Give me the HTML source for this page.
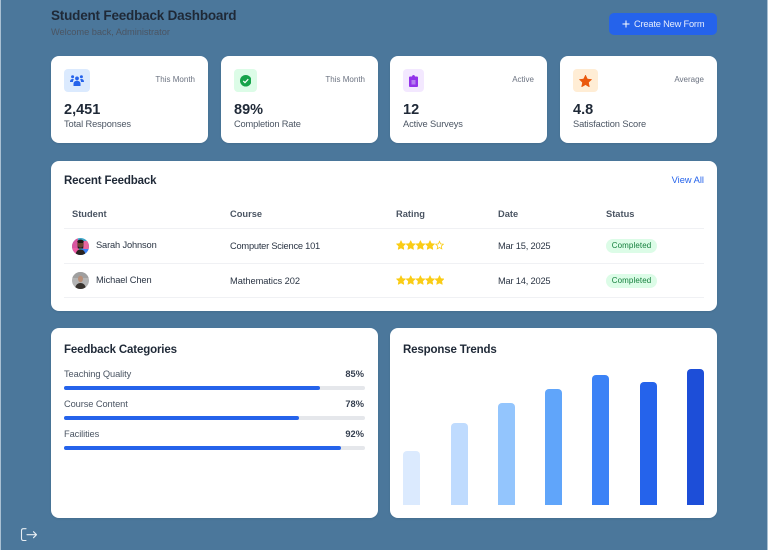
<!DOCTYPE html>
<html lang="en"><head><meta charset="utf-8"><title>Student Feedback Dashboard</title>
<style>
*{box-sizing:border-box}
html,body{margin:0;padding:0}
body{width:768px;height:550px;overflow:hidden;position:relative;background:#4b779b;font-family:"Liberation Sans",sans-serif}
.edge{position:absolute;top:0;bottom:0;width:1px;background:#a9c0d3}
.card{position:absolute;background:#fff;border-radius:8px;box-shadow:0 1px 2px rgba(0,0,0,.08)}
.t{position:absolute;white-space:nowrap;line-height:14px;height:14px}
.ib{position:absolute;top:13px;height:23px;border-radius:4px}
.ib svg{position:absolute}
.tag{top:17px;font-size:8px;color:#6b7280}
.num{top:46.500px;font-size:14.500px;font-weight:700;color:#1f2937}
.lab{top:61px;font-size:9.300px;color:#4b5563;letter-spacing:-.12px}
.h{font-size:11.500px;font-weight:700;color:#1f2937;letter-spacing:-.15px}
.th{top:207px;font-size:9.300px;font-weight:700;color:#4b5563}
.td{font-size:9.300px;color:#2b3544;letter-spacing:-.15px}
.badge{position:absolute;left:606px;width:51px;height:14px;border-radius:7px;background:#dcfce7;color:#15803d;font-size:8px;line-height:14px;text-align:center;letter-spacing:.1px}
.line{position:absolute;left:64px;width:640px;height:1px;background:#f0f1f4}
.stars{position:absolute;left:396px}
.pl{left:13px;font-size:9.300px;color:#4b5563;letter-spacing:-.1px}
.pv{right:14px;font-size:9.300px;font-weight:700;color:#374151}
.track{position:absolute;left:13px;width:301px;height:4px;border-radius:2px;background:#e5e7eb}
.fill{height:4px;border-radius:2px;background:#2563eb}
.bar{position:absolute;width:17px;bottom:13px;border-radius:4px 4px 0 0}
</style></head><body>
<div class="edge" style="left:0"></div><div class="edge" style="left:767px"></div>

<div class="t" style="left:51px;top:9px;font-size:13.500px;font-weight:700;color:#1f2937;letter-spacing:-.2px">Student Feedback Dashboard</div>
<div class="t" style="left:51px;top:25px;font-size:9.300px;color:#4b5563;letter-spacing:-.05px">Welcome back, Administrator</div>

<div style="position:absolute;left:609px;top:13px;width:108px;height:22px;border-radius:5px;background:#2563eb">
<svg style="position:absolute;left:13px;top:7px" width="8" height="8" viewBox="0 0 8 8"><path d="M4 .5v7M.5 4h7" stroke="#fff" stroke-width="1" fill="none"/></svg>
<div class="t" style="left:25px;top:4px;font-size:9.300px;color:#e6edfd;letter-spacing:-.2px">Create New Form</div>
</div>

<div class="card" style="left:51px;top:56px;width:157px;height:87px">
<div class="ib" style="left:13px;width:26px;background:#dbeafe">
<svg style="left:6px;top:6px" width="14" height="11" viewBox="0 0 14 11" fill="#2563eb"><circle cx="2.600" cy="1.800" r="1.500"/><circle cx="11.400" cy="1.800" r="1.500"/><circle cx="7" cy="3.400" r="1.900"/><path d="M0 7c0-2 1-3 2.600-3 .6 0 1 .1 1.400.4C3.300 5 3 5.900 3 7H0zM14 7c0-2-1-3-2.600-3-.6 0-1 .1-1.400.4.700.6 1 1.500 1 2.600h3zM3.500 11V8.800c0-1.800 1.400-3 3.500-3s3.500 1.200 3.500 3V11z"/></svg></div>
<div class="t tag" style="right:13px">This Month</div>
<div class="t num" style="left:13px">2,451</div>
<div class="t lab" style="left:13px">Total Responses</div>
</div>

<div class="card" style="left:221px;top:56px;width:157px;height:87px">
<div class="ib" style="left:12.700px;width:23.300px;background:#dcfce7">
<svg style="left:6px;top:6px" width="11.500" height="11.500" viewBox="0 0 12 12"><circle cx="6" cy="6" r="6" fill="#16a34a"/><path d="M3.400 6.200l1.800 1.800 3.400-3.600" stroke="#fff" stroke-width="1.300" fill="none"/></svg></div>
<div class="t tag" style="right:13px">This Month</div>
<div class="t num" style="left:13px">89%</div>
<div class="t lab" style="left:13px;letter-spacing:-.17px">Completion Rate</div>
</div>

<div class="card" style="left:390px;top:56px;width:157px;height:87px">
<div class="ib" style="left:13px;width:21px;background:#f3e8ff">
<svg style="left:6px;top:5.500px" width="9" height="12" viewBox="0 0 9 12"><path d="M1 1.500h2C3.200.5 3.700 0 4.500 0S5.800.5 6 1.500h2c.6 0 1 .4 1 1V11c0 .6-.4 1-1 1H1c-.6 0-1-.4-1-1V2.500c0-.6.4-1 1-1z" fill="#9333ea"/><rect x="2.500" y="5" width="4" height="4.500" fill="#b57fef"/></svg></div>
<div class="t tag" style="right:13px">Active</div>
<div class="t num" style="left:13px">12</div>
<div class="t lab" style="left:13px">Active Surveys</div>
</div>

<div class="card" style="left:560px;top:56px;width:157px;height:87px">
<div class="ib" style="left:13px;width:24.700px;background:#ffedd5">
<svg style="left:6px;top:5.500px" width="13" height="12" viewBox="0 0 13 12"><path d="M6.500 0l1.900 4 4.300.5-3.200 3 .9 4.500-3.900-2.300L2.600 12l.9-4.500L.3 4.500 4.600 4z" fill="#ea580c" stroke="#ea580c" stroke-width=".5" stroke-linejoin="round"/></svg></div>
<div class="t tag" style="right:13px">Average</div>
<div class="t num" style="left:13px">4.8</div>
<div class="t lab" style="left:13px;letter-spacing:-.1px">Satisfaction Score</div>
</div>

<div class="card" style="left:51px;top:161px;width:666px;height:150px"></div>
<div class="t h" style="left:64px;top:174px">Recent Feedback</div>
<div class="t" style="right:64px;top:173px;font-size:9.300px;color:#2563eb">View All</div>
<div class="t th" style="left:72px">Student</div>
<div class="t th" style="left:230px">Course</div>
<div class="t th" style="left:396px">Rating</div>
<div class="t th" style="left:498px">Date</div>
<div class="t th" style="left:606px">Status</div>
<div class="line" style="top:228px"></div>
<div class="line" style="top:263px"></div>
<div class="line" style="top:297px"></div>

<svg style="position:absolute;left:72px;top:238px" width="17" height="17" viewBox="0 0 17 17"><defs><clipPath id="a"><circle cx="8.500" cy="8.500" r="8.500"/></clipPath></defs><g clip-path="url(#a)"><rect width="17" height="17" fill="#3fa7c9"/><rect y="0" width="6" height="10" fill="#d9559f"/><rect x="11" y="3" width="6" height="8" fill="#e8669f"/><rect y="10" width="7" height="7" fill="#ee5ca6"/><rect x="10" y="11" width="7" height="6" fill="#3b82f6"/><ellipse cx="8.500" cy="6" rx="3.200" ry="4" fill="#6a4230"/><path d="M5.200 3.500C6 1 11 1 11.800 3.500L11 5H6z" fill="#1c1614"/><path d="M5.500 7c.8 3.500 5.200 3.500 6 0l-.3 3.500H5.800z" fill="#1d1715"/><path d="M3.500 17c.5-4 2.500-5.500 5-5.500s4.500 1.500 5 5.500z" fill="#2a2320"/></g></svg>
<svg style="position:absolute;left:72px;top:272px" width="17" height="17" viewBox="0 0 17 17"><defs><clipPath id="b"><circle cx="8.500" cy="8.500" r="8.500"/></clipPath></defs><g clip-path="url(#b)"><rect width="17" height="17" fill="#b4b4b4"/><rect width="17" height="6" fill="#9f9f9f"/><ellipse cx="8.500" cy="7" rx="2.500" ry="3.200" fill="#b98f78"/><path d="M3 17c.4-4 2.600-6 5.500-6s5.100 2 5.500 6z" fill="#38332e"/></g></svg>

<div class="t td" style="left:96px;top:238px">Sarah Johnson</div>
<div class="t td" style="left:230px;top:239px;letter-spacing:-.23px">Computer Science 101</div>
<svg class="stars" style="top:240px" width="48" height="11" viewBox="0 0 48 11"><g fill="#facc15" stroke="#facc15" stroke-width=".5" stroke-linejoin="round"><path id="s" d="M5 .5l1.400 3 3.300.4-2.400 2.300.6 3.300L5 8 2.100 9.500l.6-3.300L.3 3.900l3.300-.4z"/><use href="#s" x="9.700"/><use href="#s" x="19.400"/><use href="#s" x="29"/></g><path transform="translate(38.500)" d="M5 1.400l1.100 2.500 2.700.3-2 1.900.5 2.700L5 7.500 2.700 8.800l.5-2.700-2-1.900 2.700-.3z" fill="#fff" stroke="#facc15" stroke-width=".8"/></svg>
<div class="t td" style="left:498px;top:239px;letter-spacing:-.2px">Mar 15, 2025</div>
<div class="badge" style="top:239px">Completed</div>

<div class="t td" style="left:96px;top:273px;letter-spacing:-.11px">Michael Chen</div>
<div class="t td" style="left:230px;top:274px;letter-spacing:-.05px">Mathematics 202</div>
<svg class="stars" style="top:275px" width="48" height="11" viewBox="0 0 48 11"><g fill="#facc15" stroke="#facc15" stroke-width=".5" stroke-linejoin="round"><use href="#s"/><use href="#s" x="9.700"/><use href="#s" x="19.400"/><use href="#s" x="29"/><use href="#s" x="38.500"/></g></svg>
<div class="t td" style="left:498px;top:274px;letter-spacing:-.2px">Mar 14, 2025</div>
<div class="badge" style="top:274px">Completed</div>

<div class="card" style="left:51px;top:328px;width:327px;height:190px">
<div class="t h" style="left:13px;top:15px">Feedback Categories</div>
<div class="t pl" style="top:39px">Teaching Quality</div><div class="t pv" style="top:39px">85%</div>
<div class="track" style="top:58px"><div class="fill" style="width:256px"></div></div>
<div class="t pl" style="top:69px">Course Content</div><div class="t pv" style="top:69px">78%</div>
<div class="track" style="top:88px"><div class="fill" style="width:235px"></div></div>
<div class="t pl" style="top:99px">Facilities</div><div class="t pv" style="top:99px">92%</div>
<div class="track" style="top:118px"><div class="fill" style="width:277px"></div></div>
</div>

<div class="card" style="left:390px;top:328px;width:327px;height:190px">
<div class="t h" style="left:13px;top:15px">Response Trends</div>
<div class="bar" style="left:13px;height:54px;background:#dbeafe"></div>
<div class="bar" style="left:60.500px;height:82px;background:#bfdbfe"></div>
<div class="bar" style="left:107.700px;height:102px;background:#93c5fd"></div>
<div class="bar" style="left:155px;height:116px;background:#60a5fa"></div>
<div class="bar" style="left:202px;height:130px;background:#3b82f6"></div>
<div class="bar" style="left:249.500px;height:123px;background:#2563eb"></div>
<div class="bar" style="left:296.700px;height:136.500px;background:#1d4ed8"></div>
</div>

<svg style="position:absolute;left:20px;top:527px" width="18" height="15" viewBox="0 0 18 15" fill="none" stroke="#e8eef3" stroke-width="1.100" stroke-linecap="round" stroke-linejoin="round"><path d="M6 1.700H3.500C2.200 1.700 1.500 2.400 1.500 3.700v7.800c0 1.300.7 2 2 2H6M7 7.700h9.500M13.500 4.700l3 3-3 3"/></svg>
</body></html>
